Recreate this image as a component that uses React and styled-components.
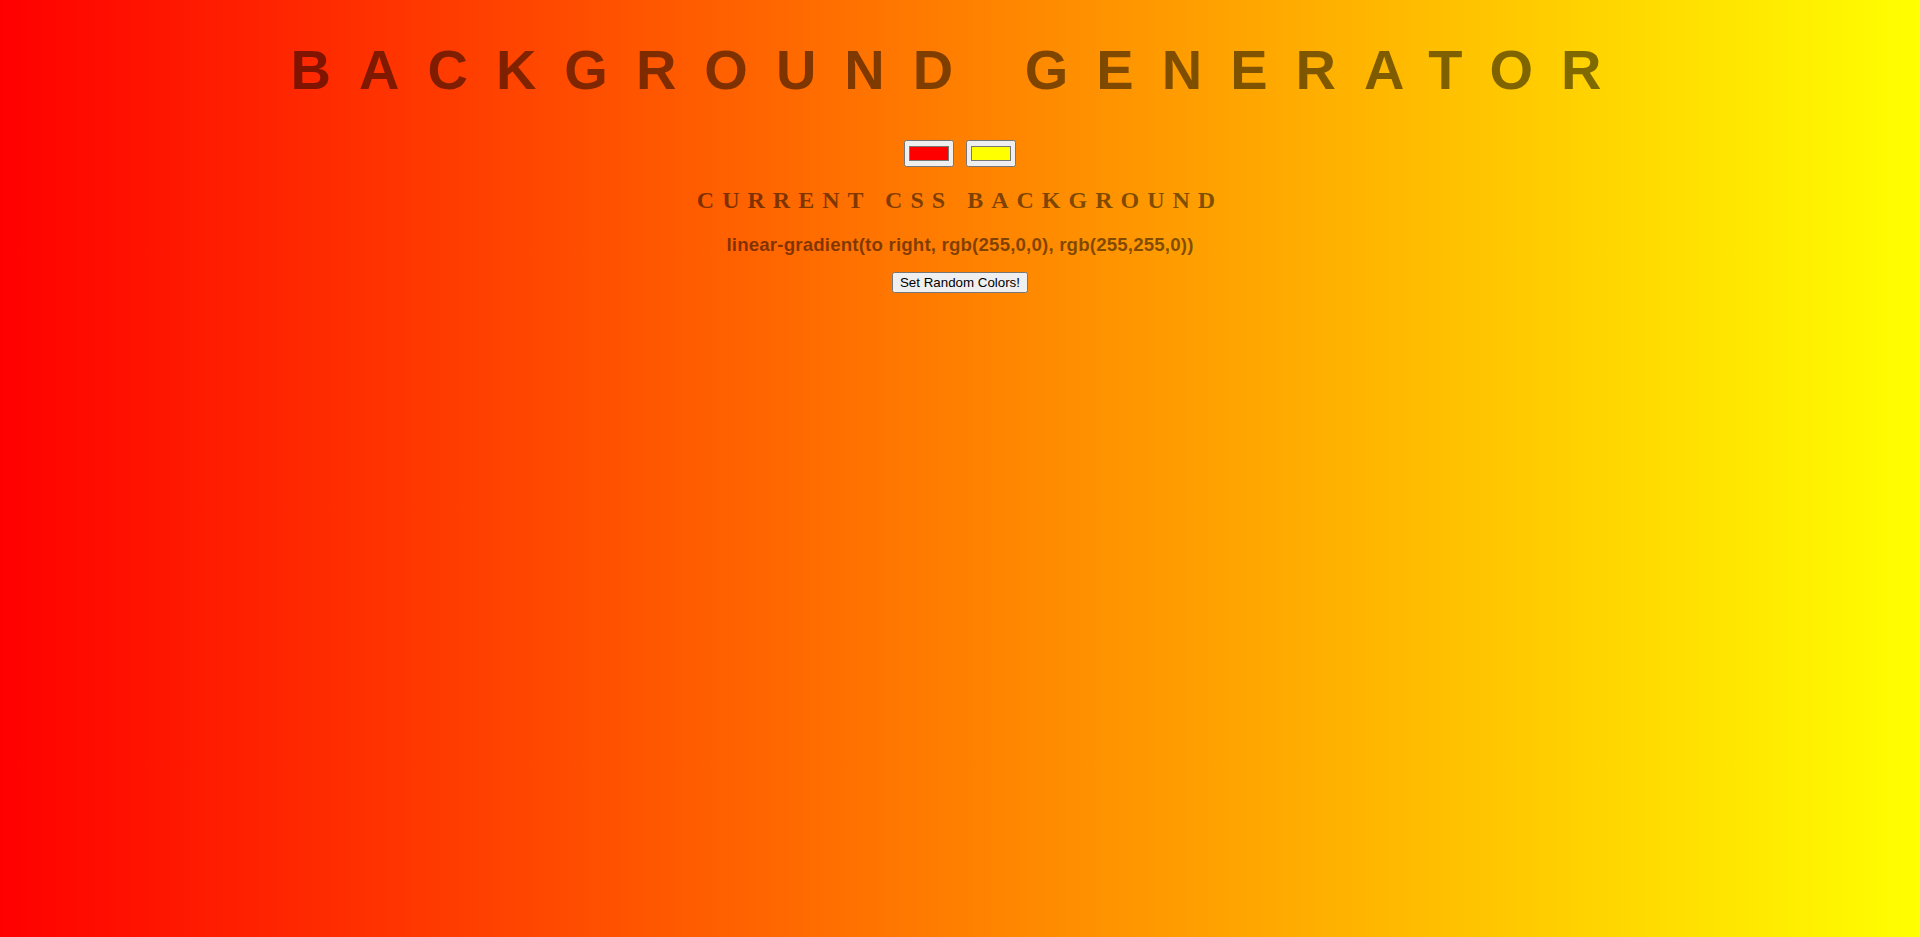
import React, { useState } from "react";
import styled, { createGlobalStyle } from "styled-components";

const GlobalStyle = createGlobalStyle`
  html {
    min-height: 100%;
  }
  body {
    margin: 8px;
    font-family: "Liberation Serif", "Times New Roman", serif;
    font-size: 16px;
    color: rgba(0, 0, 0, 0.5);
    text-align: center;
    background: ${(p) => p.$bg};
  }
`;

const Page = styled.main`
  display: block;
  text-align: center;
`;

const Title = styled.h1`
  margin: 29px 0 37.52px;
  font: 700 56px "Liberation Sans", Arial, sans-serif;
  letter-spacing: 28px;
  text-transform: uppercase;
  color: rgba(0, 0, 0, 0.5);
`;

const Pickers = styled.div`
  display: flex;
  justify-content: center;
  align-items: flex-start;
  gap: 12px;
  height: 28px;
  padding-bottom: 1px;
  box-sizing: border-box;
`;

const ColorInput = styled.input.attrs({ type: "color" })`
  width: 50px;
  height: 27px;
  margin: 0;
  cursor: pointer;
`;

const Heading = styled.h2`
  margin: 19.92px 0;
  font: 700 24px "Liberation Serif", "Times New Roman", serif;
  letter-spacing: 8px;
  text-transform: uppercase;
  color: rgba(0, 0, 0, 0.5);
`;

const Output = styled.h3`
  margin: 18.72px 0 16px;
  font: 700 18.72px "Liberation Sans", Arial, sans-serif;
  letter-spacing: 0.16px;
  color: rgba(0, 0, 0, 0.5);
`;

const RandomButton = styled.button`
  font: 400 13.333px "Liberation Sans", Arial, sans-serif;
  color: #000;
  letter-spacing: normal;
  padding: 1px 6px;
  cursor: pointer;
`;

const hexToRgb = (hex) => {
  const n = parseInt(hex.slice(1), 16);
  return `rgb(${(n >> 16) & 255},${(n >> 8) & 255},${n & 255})`;
};

const randomHex = () =>
  "#" +
  Math.floor(Math.random() * 0xffffff)
    .toString(16)
    .padStart(6, "0");

export default function App() {
  const [c1, setC1] = useState("#ff0000");
  const [c2, setC2] = useState("#ffff00");
  const css = `linear-gradient(to right, ${hexToRgb(c1)}, ${hexToRgb(c2)})`;

  return (
    <>
      <GlobalStyle $bg={css} />
      <Page>
        <Title>Background Generator</Title>
        <Pickers>
          <ColorInput value={c1} onChange={(e) => setC1(e.target.value)} />
          <ColorInput value={c2} onChange={(e) => setC2(e.target.value)} />
        </Pickers>
        <Heading>Current CSS Background</Heading>
        <Output>{css}</Output>
        <RandomButton
          onClick={() => {
            setC1(randomHex());
            setC2(randomHex());
          }}
        >
          Set Random Colors!
        </RandomButton>
      </Page>
    </>
  );
}
